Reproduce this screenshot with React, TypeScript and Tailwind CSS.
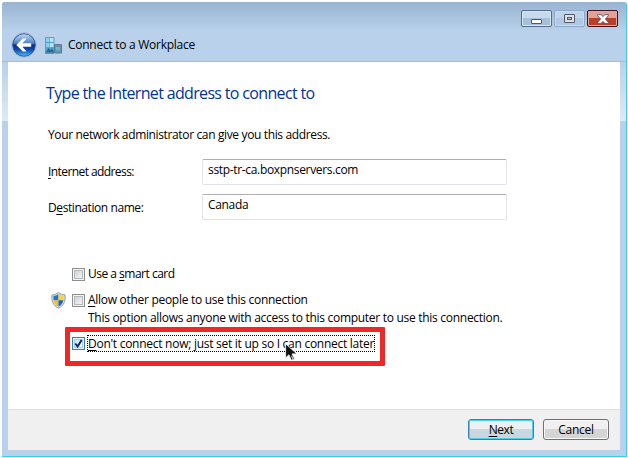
import type { ReactNode } from 'react'

interface LineProps {
  className?: string
  children: ReactNode
}

function Line({ className = '', children }: LineProps) {
  return <span className={`whitespace-nowrap leading-4 ${className}`}>{children}</span>
}

function Key({ children }: { children: ReactNode }) {
  return <span className="underline decoration-1 underline-offset-2">{children}</span>
}

function BackButton() {
  return (
    <svg width="26" height="26" viewBox="0 0 26 26">
      <defs>
        <linearGradient id="orb" x1="0" y1="0" x2="0" y2="1">
          <stop offset="0" stopColor="#c2daf3" />
          <stop offset="0.42" stopColor="#5284c8" />
          <stop offset="0.5" stopColor="#0b2f86" />
          <stop offset="0.72" stopColor="#124bb0" />
          <stop offset="1" stopColor="#48c8fa" />
        </linearGradient>
      </defs>
      <circle cx="13" cy="13" r="12.3" fill="#d3e3f4" stroke="#8fa9cc" strokeWidth="0.6" />
      <circle cx="13" cy="13" r="11.3" fill="url(#orb)" stroke="#28508f" strokeWidth="0.9" />
      <path d="M5.300 13l6.500-6.500h3.800l-4.200 4.700h8.800v3.600h-8.800l4.200 4.700h-3.800z" fill="#fff" />
    </svg>
  )
}

function WorkplaceIcon() {
  return (
    <svg width="17" height="17" viewBox="0 0 17 17">
      <path d="M.5.5h8.500v15.500H.5z" fill="#58a6d0" stroke="#6f9ab5" />
      <path d="M1 1h3.500v9H1z" fill="#8fcdec" />
      <path d="M5 1h3.500v9H5z" fill="#b4e1f5" />
      <path d="M1 5.500h7.500" stroke="#4f9ac4" />
      <path d="M1 15l2.500-4L6 13.500 7 11l2 4z" fill="#1f6a92" />
      <path d="M9.500 7.500h7V16h-7z" fill="#6c8fa6" stroke="#5c7c92" />
      <path d="M11 10h4v3.500h-4z" fill="#5cb6de" />
      <path d="M0 16h9" stroke="#3d6d8a" />
    </svg>
  )
}

function Shield() {
  return (
    <svg width="15" height="17" viewBox="0 0 15 17">
      <path d="M7.500.5C5.800 2 3.500 2.700 1 2.800.1 9 2.100 13.600 7.500 16.300 12.900 13.600 14.900 9 14 2.800 11.500 2.700 9.200 2 7.500.5z" fill="#d3d8dc" stroke="#858f96" strokeWidth="0.8" />
      <path d="M7.500 2.300C6 3.300 4.400 3.900 2.500 4.100 2.300 5.600 2.300 7 2.700 8.300H7.500z" fill="#1c78d0" />
      <path d="M7.500 2.300C9 3.300 10.600 3.900 12.500 4.100 12.700 5.600 12.700 7 12.300 8.300H7.500z" fill="#fbd432" />
      <path d="M2.700 8.300C3.300 11.200 4.900 13.200 7.500 14.600V8.300z" fill="#f6bd1e" />
      <path d="M12.300 8.300C11.700 11.200 10.100 13.200 7.500 14.600V8.300z" fill="#1769bd" />
    </svg>
  )
}

function Pointer() {
  return (
    <svg width="14" height="20" viewBox="0 0 14 20" className="absolute left-[285px] top-[343px]">
      <path d="M.6.700v14.200l3.300-3.100 2.500 5.500 3.200-1.400-2.500-5h4.800z" fill="#111" stroke="#f4f4f4" strokeWidth="0.9" />
      <path d="M6.500 12.800l1.700 3.600" stroke="#c4c4c4" strokeWidth="1.200" />
    </svg>
  )
}

function CheckBox({ checked = false }: { checked?: boolean }) {
  return (
    <span className={`flex size-[13px] shrink-0 border p-px ${checked ? 'border-[#3c7fb1] bg-[#e3f4fc]' : 'border-[#8e8f8f] bg-[#f4f4f4]'}`}>
      <span className={`flex-1 border bg-linear-to-br ${checked ? 'border-[#a5d3ee] from-[#c5e5f7] to-[#f1f9fd]' : 'border-[#b5babf] from-[#cfd3d8] to-[#f4f4f5]'}`}>
        {checked && (
          <svg width="9" height="9" viewBox="0 0 9 9" className="-m-px">
            <path d="M1.300 4.500L3.600 7.500 7.600.9" fill="none" stroke="#0f2060" strokeWidth="1.900" />
          </svg>
        )}
      </span>
    </span>
  )
}

function TextField({ value }: { value: string }) {
  return (
    <div className="h-[26px] w-[305px] rounded-[2px] border border-[#e2e3ea] border-t-[#abadb3] bg-white pl-[5px] pt-[2px]">
      <Line className="block tracking-[-0.33px]">{value}</Line>
    </div>
  )
}

function CaptionButtons() {
  return (
    <div className="flex gap-[2px] pt-2">
      <div className="flex h-[17px] w-[31px] items-center justify-center rounded-[2px] border border-[#576b8d] bg-linear-to-b from-[#c8d9ec] from-45% to-[#a6c0dc] to-50% shadow-[inset_0_0_0_1px_#d8e6f4]">
        <svg width="11" height="5" viewBox="0 0 11 5" className="mt-[5px]">
          <rect x="0.500" y="0.500" width="10" height="4" rx="0.500" fill="#fff" stroke="#535666" />
        </svg>
      </div>
      <div className="flex h-[17px] w-[31px] items-center justify-center rounded-[2px] border border-[#8fa9ca] bg-linear-to-b from-[#bfd3ea] from-45% to-[#afc8e4] to-50% shadow-[inset_0_0_0_1px_#c9dbee]">
        <svg width="11" height="9" viewBox="0 0 11 9">
          <rect x="0.500" y="0.500" width="10" height="8" rx="0.500" fill="#e0e1e5" stroke="#535666" />
          <rect x="3.500" y="3.500" width="4" height="2" fill="#b8cde6" stroke="#535666" />
        </svg>
      </div>
      <div className="flex h-[17px] w-[31px] items-center justify-center rounded-[2px] border border-[#43101c] bg-linear-to-b from-[#e2a295] from-45% to-[#bd3e28] to-50% shadow-[inset_0_0_0_1px_#e8a79b]">
        <svg width="12" height="10" viewBox="0 0 12 10">
          <path d="M.7.600h3.300L6 2.500 8 .6h3.300v1.200L8.400 5l2.900 3.200v1.200H8L6 7.500 4 9.400H.7V8.200L3.600 5 .7 1.800z" fill="#fff" stroke="#535666" strokeWidth="0.9" />
        </svg>
      </div>
    </div>
  )
}

// glass reflection that fades down the window border beside the page
function SideFrame() {
  return (
    <div className="w-[6px] shrink-0">
      <div className="h-[59px] bg-linear-to-b from-[#b9d1ea] to-[#dfe9f5]" />
    </div>
  )
}

export default function App() {
  return (
    <div className="relative h-[458px] w-[628px] overflow-hidden bg-white pl-[2px] pt-[2px] font-['Open_Sans','Noto_Sans',sans-serif] text-[12px] text-black">
      <div className="flex h-[455px] w-[625px] flex-col rounded-t-[3px] border-b border-r border-[#35d0ee] bg-[#b9d1ea]">
        <header className="h-[60px] rounded-t-[3px] border-b border-[#a3bbd6] bg-linear-to-b from-[#99b4d1] to-[#b9d1ea] to-50%">
          <div className="flex h-[30px] justify-end pr-[8px]">
            <CaptionButtons />
          </div>
          <div className="-mt-px flex h-[28px] items-center pl-[9px]">
            <BackButton />
            <div className="ml-[8px]">
              <WorkplaceIcon />
            </div>
            <Line className="ml-[6px] tracking-[-0.27px]">Connect to a Workplace</Line>
          </div>
        </header>

        <div className="flex h-[347px]">
          <SideFrame />
          <main className="flex w-[612px] flex-col bg-white pl-[38px]">
            <h1 className="mt-[20px] h-[22px] whitespace-nowrap text-[16px] leading-[22px] tracking-[-0.66px] text-[#003399]">Type the Internet address to connect to</h1>
            <Line className="ml-[2px] mt-[23px] tracking-[-0.36px]">Your network administrator can give you this address.</Line>
            <div className="mt-4 flex">
              <Line className="ml-[2px] mt-[5px] w-[154px] tracking-[-0.58px]"><Key>I</Key>nternet address:</Line>
              <TextField value="sstp-tr-ca.boxpnservers.com" />
            </div>
            <div className="mt-[9px] flex">
              <Line className="ml-[2px] mt-[6px] w-[154px] tracking-[-0.42px]">D<Key>e</Key>stination name:</Line>
              <TextField value="Canada" />
            </div>
            <div className="mt-[46px] flex h-4 items-center gap-[3px] pl-[26px]">
              <CheckBox />
              <Line className="tracking-[-0.5px]">Use a <Key>s</Key>mart card</Line>
            </div>
            <div className="mt-[10px] flex h-4 items-center pl-[5px]">
              <Shield />
              <span className="w-[6px]" />
              <CheckBox />
              <Line className="ml-[3px] tracking-[-0.29px]"><Key>A</Key>llow other people to use this connection</Line>
            </div>
            <Line className="ml-[42px] mt-[2px] tracking-[-0.285px]">This option allows anyone with access to this computer to use this connection.</Line>
            <div className="ml-[19px] mt-[1px] flex h-[39px] w-[320px] rounded-[1px] border-[5px] border-[#ee2829] pl-[2px] pt-[3px]">
              <div className="flex h-[17px] items-center gap-[2px]">
                <CheckBox checked />
                <div className="flex h-[17px] w-[288px] items-center border border-dotted border-black">
                  <Line className="tracking-[-0.27px]"><Key>D</Key>on't connect now; just set it up so I can connect later</Line>
                </div>
              </div>
            </div>
          </main>
          <SideFrame />
        </div>

        <footer className="mx-[6px] flex h-[41px] justify-end gap-[9px] border-t border-[#dfdfdf] bg-[#f0f0f0] pr-[11px] pt-[9px]">
          <button className="flex h-[21px] w-[66px] items-center justify-center rounded-[3px] border border-[#3c7fb1] bg-linear-to-b from-[#eef1f2] from-45% to-[#cad7df] to-50% shadow-[inset_0_0_0_1px_#46d0f6]">
            <Line className="tracking-[-0.4px]"><Key>N</Key>ext</Line>
          </button>
          <button className="flex h-[21px] w-[66px] items-center justify-center rounded-[3px] border border-[#707070] bg-linear-to-b from-[#f0f0f0] from-45% to-[#d5d5d5] to-50% shadow-[inset_0_0_0_1px_#fafafa]">
            <Line className="tracking-[-0.3px]">Cancel</Line>
          </button>
        </footer>
      </div>
      <Pointer />
    </div>
  )
}
